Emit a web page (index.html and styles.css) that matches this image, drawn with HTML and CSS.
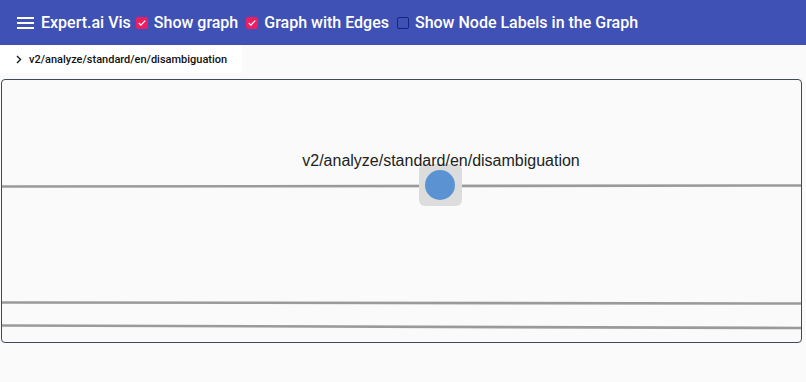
FILE: index.html
```html
<!DOCTYPE html>
<html>
<head>
<meta charset="utf-8">
<link rel="stylesheet" href="styles.css">
</head>
<body>
<header class="appbar">
  <svg class="menu" width="17" height="12" viewBox="0 0 17 12"><path d="M0 1h17M0 6h17M0 11h17" stroke="#fff" stroke-width="1.8"/></svg>
  <span class="title">Expert.ai Vis</span>
  <label class="opt"><span class="cb on"><svg width="13" height="13" viewBox="0 0 13 13"><path d="M3 6.5l2.3 2.3L10 4" fill="none" stroke="#fff" stroke-width="1.3"/></svg></span>Show graph</label>
  <label class="opt"><span class="cb on"><svg width="13" height="13" viewBox="0 0 13 13"><path d="M3 6.5l2.3 2.3L10 4" fill="none" stroke="#fff" stroke-width="1.3"/></svg></span>Graph with Edges</label>
  <label class="opt"><span class="cb"></span>Show Node Labels in the Graph</label>
</header>
<div class="tabrow">
  <div class="tab">
    <svg class="chev" width="6" height="9" viewBox="0 0 6 9"><path d="M1 1l3.5 3.5L1 8" fill="none" stroke="#111" stroke-width="1.3"/></svg>
    <span>v2/analyze/standard/en/disambiguation</span>
  </div>
</div>
<div class="graph">
  <svg class="canvas" width="799" height="262" viewBox="0 0 799 262">
    <path d="M0 106.5L799 105.5M0 222.5L799 223.5M0 245.5L799 248" stroke="#9a9a9a" stroke-width="2.6" fill="none"/>
    <rect x="417" y="84" width="43" height="42" rx="6" fill="#dcdcdc"/>
    <circle cx="438" cy="105" r="15" fill="#5b93d2"/>
    <text x="439" y="86" text-anchor="middle" class="label">v2/analyze/standard/en/disambiguation</text>
  </svg>
</div>
</body>
</html>
```
FILE: styles.css
```css
html, body {
  margin: 0;
  padding: 0;
  background: #fafafa;
  width: 806px;
  height: 382px;
  overflow: hidden;
}
.appbar {
  height: 45px;
  background: #3f51b5;
  display: flex;
  align-items: center;
  padding-left: 17px;
  color: #fff;
  font-family: Roboto, "Liberation Sans", sans-serif;
  font-weight: 500;
  font-size: 16px;
  box-sizing: border-box;
}
.menu {
  margin-right: 7px;
}
.title {
  margin-right: 5px;
}
.opt {
  display: flex;
  align-items: center;
  margin-right: 8px;
}
.cb {
  width: 12px;
  height: 12px;
  box-sizing: border-box;
  border: 1.5px solid #1a237e;
  border-radius: 2px;
  margin-right: 6px;
  display: inline-flex;
}
.cb.on {
  background: #e91e63;
  border: none;
}
.cb svg {
  width: 12px;
  height: 12px;
}
.tabrow {
  height: 28px;
  display: flex;
}
.tab {
  background: #fff;
  width: 242px;
  display: flex;
  align-items: center;
  padding-left: 16px;
  box-sizing: border-box;
  font-family: Roboto, "Liberation Sans", sans-serif;
  font-weight: 500;
  font-size: 11px;
  color: #111;
}
.chev {
  margin-right: 7px;
}
.graph {
  margin: 6px 4px 0 1px;
  height: 264px;
  border: 1px solid #3d4a5c;
  border-radius: 4px;
  box-sizing: border-box;
  overflow: hidden;
}
.canvas {
  display: block;
}
.label {
  font-family: "Liberation Sans", Arial, sans-serif;
  font-size: 16px;
  fill: #222;
}
```
